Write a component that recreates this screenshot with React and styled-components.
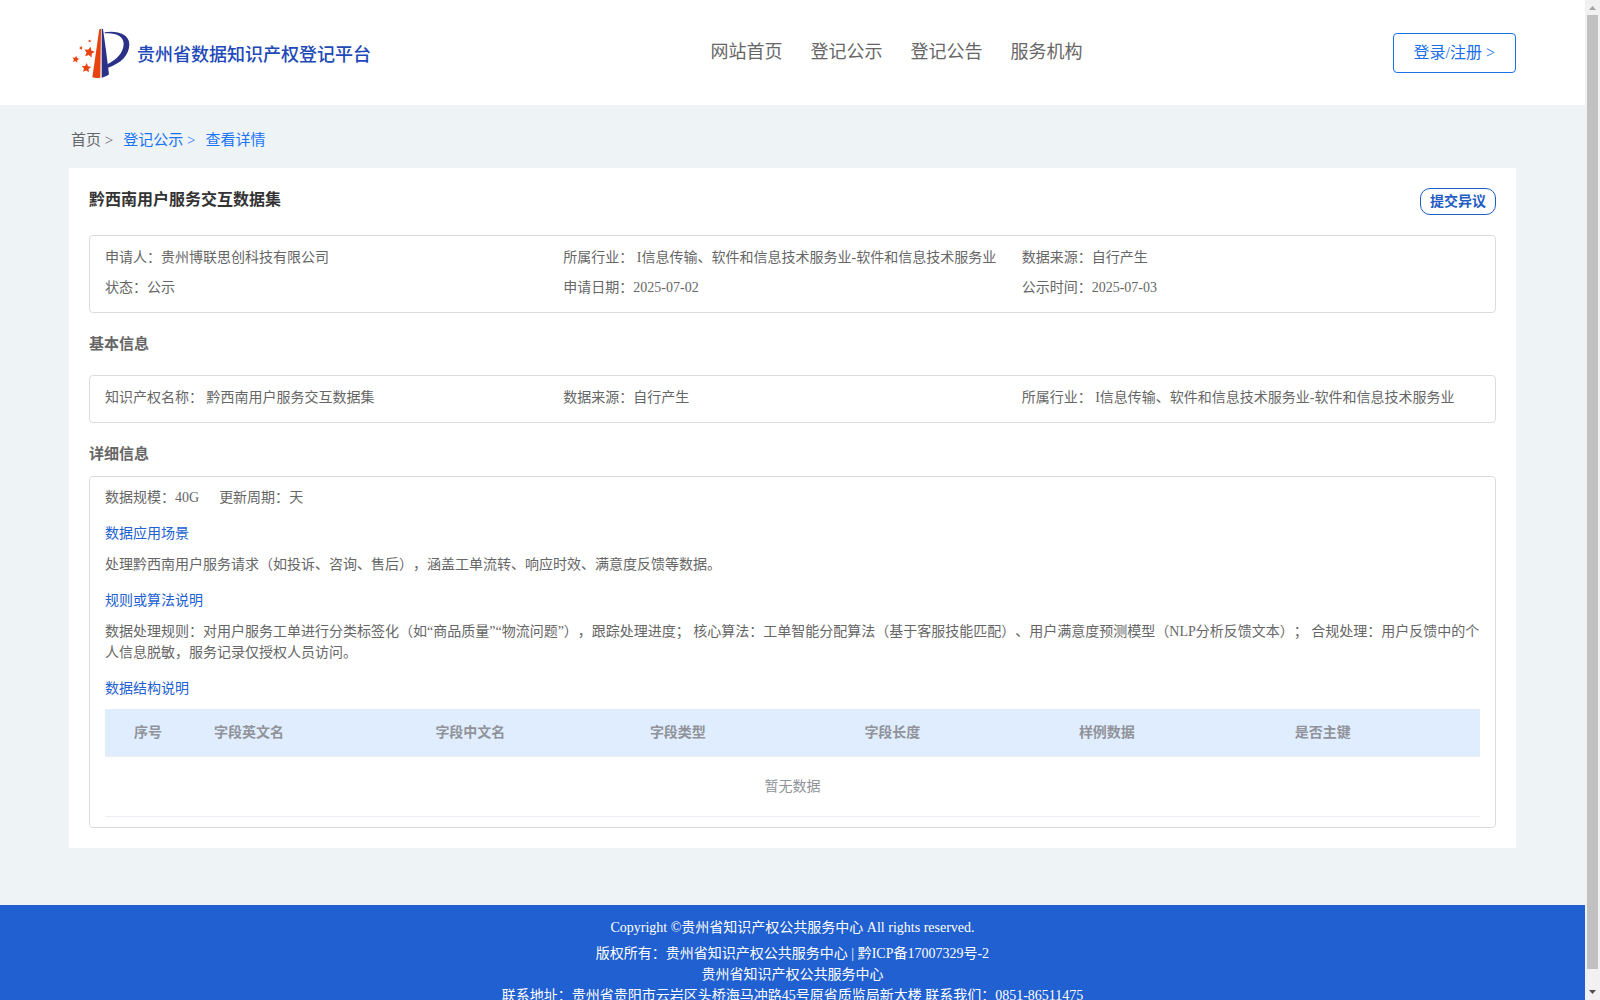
import React from 'react';
import styled, {createGlobalStyle} from 'styled-components';

const GlobalStyle = createGlobalStyle`
  * {
    box-sizing: border-box;
  }

  body {
    margin: 0;
    font-family: "Liberation Serif", "Noto Sans CJK SC", serif;
    font-size: 14px;
    line-height: 21px;
    text-spacing-trim: space-all;
    color: #666;
    background: #eef3f6;
  }

  a {
    color: inherit;
    text-decoration: none;
  }

  button {
    font-family: inherit;
    cursor: pointer;
  }

  h1, h2, h3, p, dl, dd {
    margin: 0;
  }
`;

const Shell = styled.div`
  display: grid;
  grid-template-columns: minmax(0, 1fr) 15px;
  height: 100vh;
`;

const Page = styled.div`
  overflow-y: auto;
  scrollbar-width: none;
`;

const ScrollBar = styled.div`
  display: flex;
  flex-direction: column;
  align-items: center;
  background: #f1f1f1;
`;

const ScrollArrow = styled.svg`
  width: 15px;
  height: 15px;
  fill: ${({$dim}) => ($dim ? '#a3a3a3' : '#505050')};
`;

const ScrollThumb = styled.div`
  flex: 1;
  width: 11px;
  margin-bottom: 16px;
  background: #c1c1c1;
`;

const Header = styled.header`
  display: grid;
  grid-template-columns: 3fr auto 2fr;
  align-items: center;
  height: 105px;
  padding: 0 69px;
  background: #fff;
`;

const Brand = styled.a`
  display: flex;
  align-items: center;
  gap: 7px;
  padding-left: 3px;
  font-size: 18px;
  font-weight: 500;
  color: #2148b8;
`;

const BrandName = styled.span`
  padding-top: 5px;
`;

const Nav = styled.nav`
  display: flex;
  gap: 28px;
  padding-right: 6px;
  font-size: 18px;
`;

const LoginButton = styled.button`
  justify-self: end;
  height: 40px;
  padding: 0 20px 3px;
  border: 1px solid #1a6fec;
  border-radius: 4px;
  background: #fff;
  font-size: 16px;
  color: #1a6fec;
`;

const Main = styled.main`
  padding: 25px 69px 57px;
`;

const Breadcrumb = styled.nav`
  display: flex;
  gap: 10px;
  padding: 0 2px;
  margin-bottom: 17px;
  font-size: 15px;
`;

const Crumb = styled.a`
  color: ${({$active}) => ($active ? '#1a74f4' : '#666')};
`;

const Card = styled.section`
  padding: 20px;
  background: #fff;
`;

const TitleRow = styled.div`
  display: flex;
  justify-content: space-between;
  align-items: flex-start;
  height: 47px;
`;

const Title = styled.h1`
  font-size: 16px;
  line-height: 24px;
  color: #333;
`;

const ObjectionButton = styled.button`
  height: 27px;
  padding: 0 9px 3px;
  border: 1px solid #1f5cc4;
  border-radius: 10px;
  background: #fff;
  font-size: 14px;
  font-weight: bold;
  color: #1f5cc4;
`;

const SectionTitle = styled.h2`
  height: ${({$tall}) => ($tall ? '62px' : '53px')};
  padding-top: 21px;
  font-size: 15px;
  line-height: 21px;
`;

const Box = styled.div`
  padding: ${({$detail}) => ($detail ? '10px 15px' : '7px 15px 9px')};
  border: 1px solid #dcdcdc;
  border-radius: 4px;
`;

const InfoGrid = styled.dl`
  display: grid;
  grid-template-columns: repeat(3, 1fr);
  line-height: 30px;
`;

const InfoItem = styled.div`
  display: flex;
  white-space: pre;
`;

const Stats = styled.dl`
  display: flex;
  gap: 20px;
`;

const SubTitle = styled.h3`
  margin: 15px 0 10px;
  font-size: 14px;
  font-weight: normal;
  color: #2160d0;
`;

const Table = styled.table`
  width: 100%;
  border-collapse: separate;
  border-spacing: 0;
  table-layout: fixed;
  color: #909399;

  th, td {
    padding: 0 10px;
    border-bottom: 1px solid #ebeef5;
  }

  th {
    height: 48px;
    text-align: left;
    background: #e0edff;
  }

  th:first-child {
    padding-left: 29px;
  }

  td {
    height: 60px;
    text-align: center;
  }
`;

const Col = styled.col`
  width: ${({$width}) => $width};
`;

const Footer = styled.footer`
  padding: 12px 0;
  background: #2160d0;
  color: #fff;
  text-align: center;
`;

const Copyright = styled.p`
  margin-bottom: 5px;
`;

const navItems = ['网站首页', '登记公示', '登记公告', '服务机构'];

const summary = [
    ['申请人：', '贵州博联思创科技有限公司'],
    ['所属行业：', ' I信息传输、软件和信息技术服务业-软件和信息技术服务业'],
    ['数据来源：', '自行产生'],
    ['状态：', '公示'],
    ['申请日期：', '2025-07-02'],
    ['公示时间：', '2025-07-03'],
];

const basicInfo = [
    ['知识产权名称：', ' 黔西南用户服务交互数据集'],
    ['数据来源：', '自行产生'],
    ['所属行业：', ' I信息传输、软件和信息技术服务业-软件和信息技术服务业'],
];

const columns = [
    {title: '序号', width: '7.2%'},
    {title: '字段英文名', width: '16.1%'},
    {title: '字段中文名', width: '15.6%'},
    {title: '字段类型', width: '15.6%'},
    {title: '字段长度', width: '15.6%'},
    {title: '样例数据', width: '15.7%'},
    {title: '是否主键', width: '14.2%'},
];

// [center x, center y, radius, rotation]
const stars = [
    [70, 97, 17, 12],
    [61, 144, 15, 5],
    [29, 118, 11, 10],
    [45, 84, 6, 20],
    [71, 63, 5, 20],
];

const starPoints = (cx, cy, r, rotate) =>
    Array.from({length: 10}, (_, i) => {
        const radius = i % 2 ? r * 0.48 : r;
        const angle = ((i * 36 - 90 + rotate) * Math.PI) / 180;
        return `${cx + radius * Math.cos(angle)},${cy + radius * Math.sin(angle)}`;
    }).join(' ');

const Logo = () => (
    <svg width="58" height="50" viewBox="18 24 174 150" aria-hidden="true">
        <g fill="#e8420f">
            <path d="M100 27h5l-2 146c-8 1-16 1-24-1z"/>
            {stars.map((star) => <polygon key={star.join()} points={starPoints(...star)}/>)}
        </g>
        <g fill="#2b3187">
            <path d="M107 26l4 1 8 57 10 79c-6 5-13 8-22 10z"/>
            <path d="M116 37c36-6 74 5 74 36 0 34-27 58-64 70l-2-10c26-13 48-33 49-60 1-25-25-36-57-33z"/>
        </g>
    </svg>
);

const Info = ({items}) => (
    <InfoGrid>
        {items.map(([label, value]) => (
            <InfoItem key={label}>
                <dt>{label}</dt>
                <dd>{value}</dd>
            </InfoItem>
        ))}
    </InfoGrid>
);

const App = () => {
    return (
        <Shell>
            <GlobalStyle/>
            <Page>
                <Header>
                    <Brand href="#">
                        <Logo/>
                        <BrandName>贵州省数据知识产权登记平台</BrandName>
                    </Brand>
                    <Nav>
                        {navItems.map((item) => <a href="#" key={item}>{item}</a>)}
                    </Nav>
                    <LoginButton type="button">登录/注册 &gt;</LoginButton>
                </Header>

                <Main>
                    <Breadcrumb>
                        <Crumb href="#">首页 &gt;</Crumb>
                        <Crumb href="#" $active>登记公示 &gt;</Crumb>
                        <Crumb href="#" $active>查看详情</Crumb>
                    </Breadcrumb>

                    <Card>
                        <TitleRow>
                            <Title>黔西南用户服务交互数据集</Title>
                            <ObjectionButton type="button">提交异议</ObjectionButton>
                        </TitleRow>
                        <Box>
                            <Info items={summary}/>
                        </Box>

                        <SectionTitle $tall>基本信息</SectionTitle>
                        <Box>
                            <Info items={basicInfo}/>
                        </Box>

                        <SectionTitle>详细信息</SectionTitle>
                        <Box $detail>
                            <Stats>
                                <InfoItem><dt>数据规模：</dt><dd>40G</dd></InfoItem>
                                <InfoItem><dt>更新周期：</dt><dd>天</dd></InfoItem>
                            </Stats>
                            <SubTitle>数据应用场景</SubTitle>
                            <p>处理黔西南用户服务请求（如投诉、咨询、售后），涵盖工单流转、响应时效、满意度反馈等数据。</p>
                            <SubTitle>规则或算法说明</SubTitle>
                            <p>数据处理规则：对用户服务工单进行分类标签化（如“商品质量”“物流问题”），跟踪处理进度； 核心算法：工单智能分配算法（基于客服技能匹配）、用户满意度预测模型（NLP分析反馈文本）； 合规处理：用户反馈中的个人信息脱敏，服务记录仅授权人员访问。</p>
                            <SubTitle>数据结构说明</SubTitle>
                            <Table>
                                <colgroup>
                                    {columns.map((col) => <Col key={col.title} $width={col.width}/>)}
                                </colgroup>
                                <thead>
                                    <tr>
                                        {columns.map((col) => <th key={col.title} scope="col">{col.title}</th>)}
                                    </tr>
                                </thead>
                                <tbody>
                                    <tr>
                                        <td colSpan={columns.length}>暂无数据</td>
                                    </tr>
                                </tbody>
                            </Table>
                        </Box>
                    </Card>
                </Main>

                <Footer>
                    <Copyright>Copyright ©贵州省知识产权公共服务中心 All rights reserved.</Copyright>
                    <p>版权所有：贵州省知识产权公共服务中心 | <a href="#">黔ICP备17007329号-2</a></p>
                    <p>贵州省知识产权公共服务中心</p>
                    <p>联系地址：贵州省贵阳市云岩区头桥海马冲路45号原省质监局新大楼 联系我们：0851-86511475</p>
                </Footer>
            </Page>

            <ScrollBar aria-hidden="true">
                <ScrollArrow viewBox="0 0 15 15" $dim><path d="M4 10h7L7.500 6z"/></ScrollArrow>
                <ScrollThumb/>
                <ScrollArrow viewBox="0 0 15 15"><path d="M4 5h7L7.500 9z"/></ScrollArrow>
            </ScrollBar>
        </Shell>
    );
};

export default App;
